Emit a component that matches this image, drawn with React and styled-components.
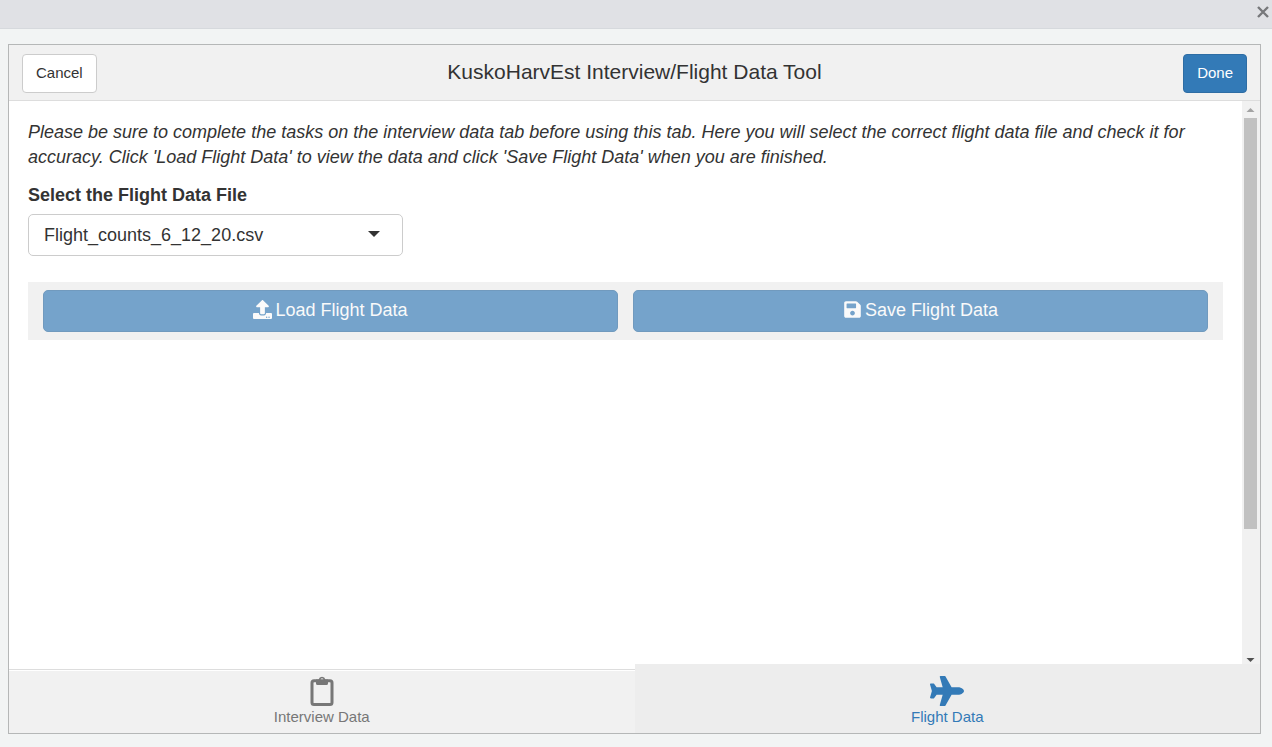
import React, { useState } from "react";
import styled, { createGlobalStyle } from "styled-components";
import { FaUpload, FaSave, FaPlane } from "react-icons/fa";

const GlobalStyle = createGlobalStyle`
  *, *::before, *::after { box-sizing: border-box; }
  body {
    margin: 0;
    background: #f2f4f4;
    color: #333;
    font-family: "Liberation Sans", Arial, Helvetica, sans-serif;
    font-size: 18px;
    line-height: 25px;
  }
  button, select { font: inherit; color: inherit; }
`;

const Page = styled.div`
  min-height: 100vh;
  display: flex;
  flex-direction: column;
`;

const WindowBar = styled.div`
  height: 29px;
  display: flex;
  justify-content: flex-end;
  align-items: flex-start;
  padding: 6px 3px 0 0;
  background: #e0e1e5;
  border-bottom: 1px solid #d6d9dd;
`;

const CloseButton = styled.button`
  display: flex;
  padding: 0;
  border: 0;
  background: none;
  color: #77787b;
  cursor: pointer;
`;

const Frame = styled.div`
  flex: 1;
  display: flex;
  flex-direction: column;
  margin: 15px 11px 13px 8px;
  border: 1px solid #b5b7b7;
  background: #fff;
`;

const TitleBar = styled.header`
  display: grid;
  grid-template-columns: 1fr auto 1fr;
  align-items: start;
  height: 56px;
  padding: 9px 13px 0;
  background: #f1f1f1;
  border-bottom: 1px solid #ddd;
`;

const Title = styled.h1`
  margin: 0;
  font-size: 21px;
  font-weight: 400;
  line-height: 36px;
`;

const BarButton = styled.button`
  justify-self: ${(p) => (p.$primary ? "end" : "start")};
  height: 39px;
  padding: 0 13px 2px;
  border: 1px solid ${(p) => (p.$primary ? "#2e6da4" : "#ccc")};
  border-radius: 4px;
  background: ${(p) => (p.$primary ? "#337ab7" : "#fff")};
  color: ${(p) => (p.$primary ? "#fff" : "#333")};
  font-size: 15px;
  line-height: 20px;
  cursor: pointer;
`;

const Body = styled.div`
  flex: 1;
  display: flex;
`;

const Content = styled.main`
  flex: 1;
  min-width: 0;
  padding: 19px 19px 0;
`;

const Intro = styled.p`
  margin: 0 0 13px;
  font-style: italic;
`;

const FieldLabel = styled.label`
  display: block;
  margin-bottom: 6px;
  font-weight: 700;
`;

const SelectBox = styled.div`
  position: relative;
  width: 375px;
  max-width: 100%;
  margin-bottom: 26px;
`;

const Select = styled.select`
  display: block;
  width: 100%;
  height: 42px;
  padding: 0 40px 0 15px;
  appearance: none;
  border: 1px solid #ccc;
  border-radius: 5px;
  background: #fff;
`;

const Caret = styled.svg`
  position: absolute;
  right: 23px;
  top: 17px;
  pointer-events: none;
`;

const ActionPanel = styled.div`
  display: grid;
  grid-template-columns: 1fr 1fr;
  gap: 15px;
  padding: 8px 15px;
  background: #f1f1f1;
`;

const ActionButton = styled.button`
  display: flex;
  justify-content: center;
  align-items: center;
  gap: 3px;
  height: 42px;
  padding: 0 16px 2px;
  border: 1px solid #2e6da4;
  border-radius: 5px;
  background: #337ab7;
  color: #fff;
  opacity: 0.65;

  svg { margin-bottom: 2px; }
`;

const ScrollRail = styled.div`
  width: 18px;
  display: flex;
  flex-direction: column;
  background: #f1f1f1;
`;

const RailArrow = styled.svg`
  flex: none;
  display: block;
`;

const Thumb = styled.div`
  flex: 7;
  margin: 0 3px 0 2px;
  background: #c1c1c1;
`;

const RailRest = styled.div`
  flex: 2;
`;

const Tabs = styled.nav`
  display: grid;
  grid-template-columns: 1fr 1fr;
  align-items: end;
`;

const Tab = styled.button`
  display: flex;
  flex-direction: column;
  align-items: center;
  justify-content: flex-end;
  gap: 1px;
  height: ${(p) => (p.$active ? 69 : 64)}px;
  padding: 0 0 6px;
  border: 0;
  border-top: ${(p) => (p.$active ? "0" : "1px solid #ddd")};
  box-shadow: ${(p) => (p.$active ? "none" : "inset 0 1px 0 #fff")};
  background: ${(p) => (p.$active ? "#ededed" : "#f1f1f1")};
  color: ${(p) => (p.$active ? "#337ab7" : "#777")};
  font-size: 15px;
  line-height: 20px;
  cursor: pointer;
`;

const TabIcon = styled.span`
  height: 30px;
  display: flex;
  align-items: center;
`;

const ClipboardIcon = () => (
  <svg width="24" height="30" viewBox="0 0 24 30" aria-hidden="true">
    <rect x="2" y="4.700" width="20" height="23.800" rx="2" fill="none" stroke="currentColor" strokeWidth="3" />
    <path
      fill="currentColor"
      fillRule="evenodd"
      d="M6 3.500H8.600A3.500 3.500 0 0 1 15.400 3.500H18V7.400Q18 9 16.400 9H7.600Q6 9 6 7.400ZM12 2.300A1.500 1.500 0 1 0 12 5.300A1.500 1.500 0 1 0 12 2.300Z"
    />
  </svg>
);

export default function App() {
  const [tab, setTab] = useState("flight");
  return (
    <Page>
      <GlobalStyle />
      <WindowBar>
        <CloseButton aria-label="Close">
          <svg width="12" height="12" viewBox="0 0 12 12" fill="none" stroke="currentColor" strokeWidth="2.4">
            <path d="M1 1 11 11M11 1 1 11" />
          </svg>
        </CloseButton>
      </WindowBar>
      <Frame>
        <TitleBar>
          <BarButton>Cancel</BarButton>
          <Title>KuskoHarvEst Interview/Flight Data Tool</Title>
          <BarButton $primary>Done</BarButton>
        </TitleBar>
        <Body>
          <Content>
            <Intro>
              Please be sure to complete the tasks on the interview data tab before using this tab. Here you will select
              the correct flight data file and check it for accuracy. Click 'Load Flight Data' to view the data and
              click 'Save Flight Data' when you are finished.
            </Intro>
            <FieldLabel htmlFor="flight-file">Select the Flight Data File</FieldLabel>
            <SelectBox>
              <Select id="flight-file">
                <option>Flight_counts_6_12_20.csv</option>
              </Select>
              <Caret width="12" height="6" viewBox="0 0 12 6" aria-hidden="true">
                <path d="M0 0H12L6 6Z" fill="#333" />
              </Caret>
            </SelectBox>
            <ActionPanel>
              <ActionButton disabled>
                <FaUpload size={19} />
                Load Flight Data
              </ActionButton>
              <ActionButton disabled>
                <FaSave size={19} />
                Save Flight Data
              </ActionButton>
            </ActionPanel>
          </Content>
          <ScrollRail aria-hidden="true">
            <RailArrow width="17" height="17" viewBox="0 0 17 17">
              <path d="M4.500 11H12.500L8.500 7Z" fill="#a3a3a3" />
            </RailArrow>
            <Thumb />
            <RailRest />
            <RailArrow width="17" height="17" viewBox="0 0 17 17">
              <path d="M4.500 11H12.500L8.500 15Z" fill="#505050" />
            </RailArrow>
          </ScrollRail>
        </Body>
        <Tabs>
          <Tab $active={tab === "interview"} onClick={() => setTab("interview")}>
            <TabIcon>
              <ClipboardIcon />
            </TabIcon>
            Interview Data
          </Tab>
          <Tab $active={tab === "flight"} onClick={() => setTab("flight")}>
            <TabIcon>
              <FaPlane size={34} />
            </TabIcon>
            Flight Data
          </Tab>
        </Tabs>
      </Frame>
    </Page>
  );
}
